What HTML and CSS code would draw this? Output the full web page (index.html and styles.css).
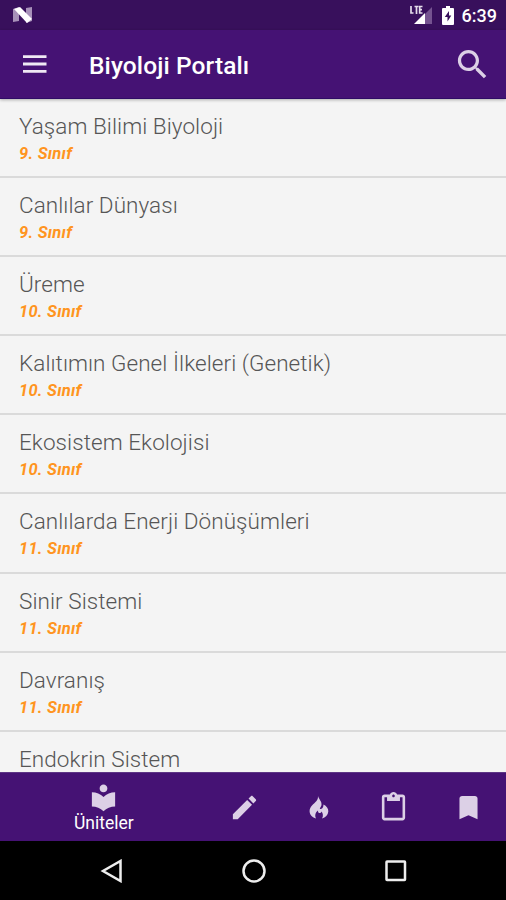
FILE: index.html
```html
<!DOCTYPE html>
<html lang="tr">
<head>
    <meta charset="UTF-8">
    <meta name="viewport" content="width=device-width, initial-scale=1.0">
    <title>Biyoloji Portalı</title>
    <link rel="stylesheet" href="styles.css">
</head>
<body>
    <!-- Status bar -->
    <div class="status-bar">
        <svg class="n-logo" width="20" height="16" viewBox="0 0 20 16">
            <path d="M0 2L6 0V14L0 15Z" fill="#a791b9"/>
            <path d="M13 1L19 0V14L13 16Z" fill="#a791b9"/>
            <path d="M1 2L7 0L19 12L14 16Z" fill="#fff"/>
        </svg>
        <div class="status-icons">
            <svg class="signal" width="23" height="20" viewBox="0 0 23 20">
                <path d="M22 2V19H5Z" fill="#755390"/>
                <path d="M15 8V19H4Z" fill="#fff"/>
                <path d="M1 1V8H3.500M4.500 1.500H8.500M6.500 1.500V9M12.500 1.500H9.700V8H12.500M9.700 4.700H12" fill="none" stroke="#e4dcea" stroke-width="1.700"/>
            </svg>
            <svg class="battery" width="12" height="19" viewBox="0 0 12 19">
                <path d="M4 0H8V2H11Q12 2 12 3V18Q12 19 11 19H1Q0 19 0 18V3Q0 2 1 2H4Z" fill="#fff"/>
                <path d="M7 5L2.800 11H5.500V15.500L9.300 9.500H7Z" fill="#38105c"/>
            </svg>
            <span class="time">6:39</span>
        </div>
    </div>

    <!-- App bar -->
    <div class="app-bar">
        <svg class="menu-icon" width="24" height="18" viewBox="0 0 24 18">
            <path d="M0 1.600H23.500M0 9H23.500M0 16.400H23.500" stroke="#efe9f4" stroke-width="2.800"/>
        </svg>
        <h1>Biyoloji Portalı</h1>
        <svg class="search-icon" width="39" height="39" viewBox="0 0 24 24">
            <path d="M15.500 14h-.79l-.28-.27C15.410 12.590 16 11.110 16 9.500 16 5.910 13.090 3 9.500 3S3 5.910 3 9.500 5.910 16 9.500 16c1.610 0 3.090-.59 4.230-1.570l.27.28v.79l5 4.990L20.490 19l-4.990-5zm-6 0C7.010 14 5 11.990 5 9.500S7.010 5 9.500 5 14 7.010 14 9.500 11.990 14 9.500 14z" fill="#dcd0e6"/>
        </svg>
    </div>

    <!-- Units -->
    <div class="list">
        <div class="item">
            <p class="name">Yaşam Bilimi Biyoloji</p>
            <p class="grade">9. Sınıf</p>
        </div>
        <div class="item">
            <p class="name">Canlılar Dünyası</p>
            <p class="grade">9. Sınıf</p>
        </div>
        <div class="item">
            <p class="name">Üreme</p>
            <p class="grade">10. Sınıf</p>
        </div>
        <div class="item">
            <p class="name">Kalıtımın Genel İlkeleri (Genetik)</p>
            <p class="grade">10. Sınıf</p>
        </div>
        <div class="item">
            <p class="name">Ekosistem Ekolojisi</p>
            <p class="grade">10. Sınıf</p>
        </div>
        <div class="item">
            <p class="name">Canlılarda Enerji Dönüşümleri</p>
            <p class="grade">11. Sınıf</p>
        </div>
        <div class="item">
            <p class="name">Sinir Sistemi</p>
            <p class="grade">11. Sınıf</p>
        </div>
        <div class="item">
            <p class="name">Davranış</p>
            <p class="grade">11. Sınıf</p>
        </div>
        <div class="item last">
            <p class="name">Endokrin Sistem</p>
        </div>
    </div>

    <!-- Bottom tabs -->
    <div class="tabs">
        <div class="tab active">
            <svg width="31" height="31" viewBox="0 0 24 24">
                <path d="M12 11.550C9.640 9.350 6.480 8 3 8v11c3.480 0 6.640 1.350 9 3.550 2.360-2.190 5.520-3.550 9-3.550V8c-3.480 0-6.640 1.350-9 3.550zM12 8c1.660 0 3-1.340 3-3s-1.340-3-3-3-3 1.340-3 3 1.340 3 3 3z"/>
            </svg>
            <span>Üniteler</span>
        </div>
        <div class="tab">
            <svg width="31" height="31" viewBox="0 0 24 24">
                <path d="M3 17.250V21h3.750L17.810 9.940l-3.750-3.750L3 17.250zM20.710 7.040c.39-.39.39-1.020 0-1.410l-2.340-2.340c-.39-.39-1.020-.39-1.410 0l-1.830 1.830 3.750 3.750 1.830-1.830z"/>
            </svg>
        </div>
        <div class="tab">
            <svg width="20" height="23" viewBox="0 0 20 23">
                <path d="M9 0C9.500 3 13 5 12.500 9C12.300 10.500 11 11.500 10.800 13C12.500 13.500 14.500 12 14.500 8.500C17.500 10 19.500 12.500 19.300 15.500C19 19 16.500 21.500 13 22.500C14.500 20 14 17.500 12.500 15.500C12 17 11 17.300 10 17C9 16.500 9 15.500 9 14.500C6.500 16 5.500 19.500 7 22.500C3.500 21.500 .8 19 .6 15.500C.3 10.500 5 8 7.500 5C8.800 3.500 9 2 9 0Z"/>
            </svg>
        </div>
        <div class="tab">
            <svg width="31" height="31" viewBox="0 0 24 24">
                <path d="M19 2h-4.180C14.400.840 13.300 0 12 0c-1.300 0-2.400.840-2.820 2H5c-1.100 0-2 .9-2 2v16c0 1.100.9 2 2 2h14c1.100 0 2-.9 2-2V4c0-1.100-.9-2-2-2zm-7 0c.55 0 1 .45 1 1s-.45 1-1 1-1-.45-1-1 .45-1 1-1zm7 18H5V4h2v3h10V4h2v16z"/>
            </svg>
        </div>
        <div class="tab">
            <svg width="31" height="31" viewBox="0 0 24 24">
                <path d="M17 3H7c-1.100 0-1.990.9-1.990 2L5 21l7-3 7 3V5c0-1.100-.9-2-2-2z"/>
            </svg>
        </div>
    </div>

    <!-- System buttons -->
    <div class="nav-bar">
        <svg width="24" height="24" viewBox="0 0 24 24"><path d="M20.500 2V22L3 12Z"/></svg>
        <svg width="24" height="24" viewBox="0 0 24 24"><circle cx="12" cy="12" r="10.500"/></svg>
        <svg width="24" height="24" viewBox="0 0 24 24"><rect x="2.500" y="2.500" width="18.500" height="18.500" rx="0.500"/></svg>
    </div>
</body>
</html>
```
FILE: styles.css
```css
* {
    box-sizing: border-box;
}

body {
    margin: 0;
    height: 900px;
    display: flex;
    flex-direction: column;
    overflow: hidden;
    background: #f4f4f4;
    font-family: Roboto, 'Noto Sans', sans-serif;
}

h1, p {
    margin: 0;
}

svg {
    display: block;
    flex: none;
}

.status-bar {
    flex: none;
    height: 30px;
    padding: 0 9px 0 13px;
    display: flex;
    justify-content: space-between;
    align-items: center;
    background: #38105c;
}

.status-icons {
    display: flex;
    align-items: center;
}

.signal {
    margin-right: 9px;
    margin-bottom: 1px;
}

.battery {
    margin-right: 8px;
}

.time {
    color: #fff;
    font-size: 18px;
    font-weight: 500;
    line-height: 30px;
    padding-top: 2px;
}

.app-bar {
    flex: none;
    position: relative;
    height: 69px;
    padding: 0 14px 0 23px;
    display: flex;
    align-items: center;
    background: #451274;
    border-bottom: 1px solid #2f0c66;
    box-shadow: 0 1px 3px rgba(0, 0, 0, 0.3);
}

.app-bar h1 {
    flex: 1;
    margin-left: 42px;
    padding-top: 3px;
    color: #fff;
    font-size: 24.5px;
    font-weight: 500;
    line-height: 30px;
    letter-spacing: 0.1px;
    white-space: nowrap;
}

.list {
    flex: 1;
    min-height: 0;
    overflow: hidden;
}

.item {
    height: 79.1px;
    padding: 14px 19px 0;
    border-bottom: 2px solid #dadada;
}

.item.last {
    height: auto;
    border-bottom: none;
}

.name {
    color: #565656;
    font-size: 22.5px;
    font-weight: 300;
    line-height: 27px;
    letter-spacing: 0.06px;
    white-space: nowrap;
}

.grade {
    margin-top: 2px;
    color: #ff9420;
    font-size: 16.5px;
    font-style: italic;
    font-weight: 700;
    line-height: 24px;
    letter-spacing: 0.25px;
}

.tabs {
    flex: none;
    height: 69px;
    padding-left: 1px;
    display: flex;
    background: #451274;
    border-top: 1px solid #5d3585;
}

.tab {
    width: 75px;
    display: flex;
    flex-direction: column;
    align-items: center;
    justify-content: center;
    fill: #dcd0e6;
}

.tab.active {
    width: 206px;
    justify-content: flex-start;
    padding-top: 9px;
}

.tab span {
    color: #fff;
    font-size: 17.5px;
    line-height: 20px;
}

.nav-bar {
    flex: none;
    height: 59px;
    padding: 0 98px 0 100px;
    display: flex;
    align-items: center;
    justify-content: space-between;
    background: #000;
}

.nav-bar svg {
    fill: none;
    stroke: #eee;
    stroke-width: 2.5;
}
```
